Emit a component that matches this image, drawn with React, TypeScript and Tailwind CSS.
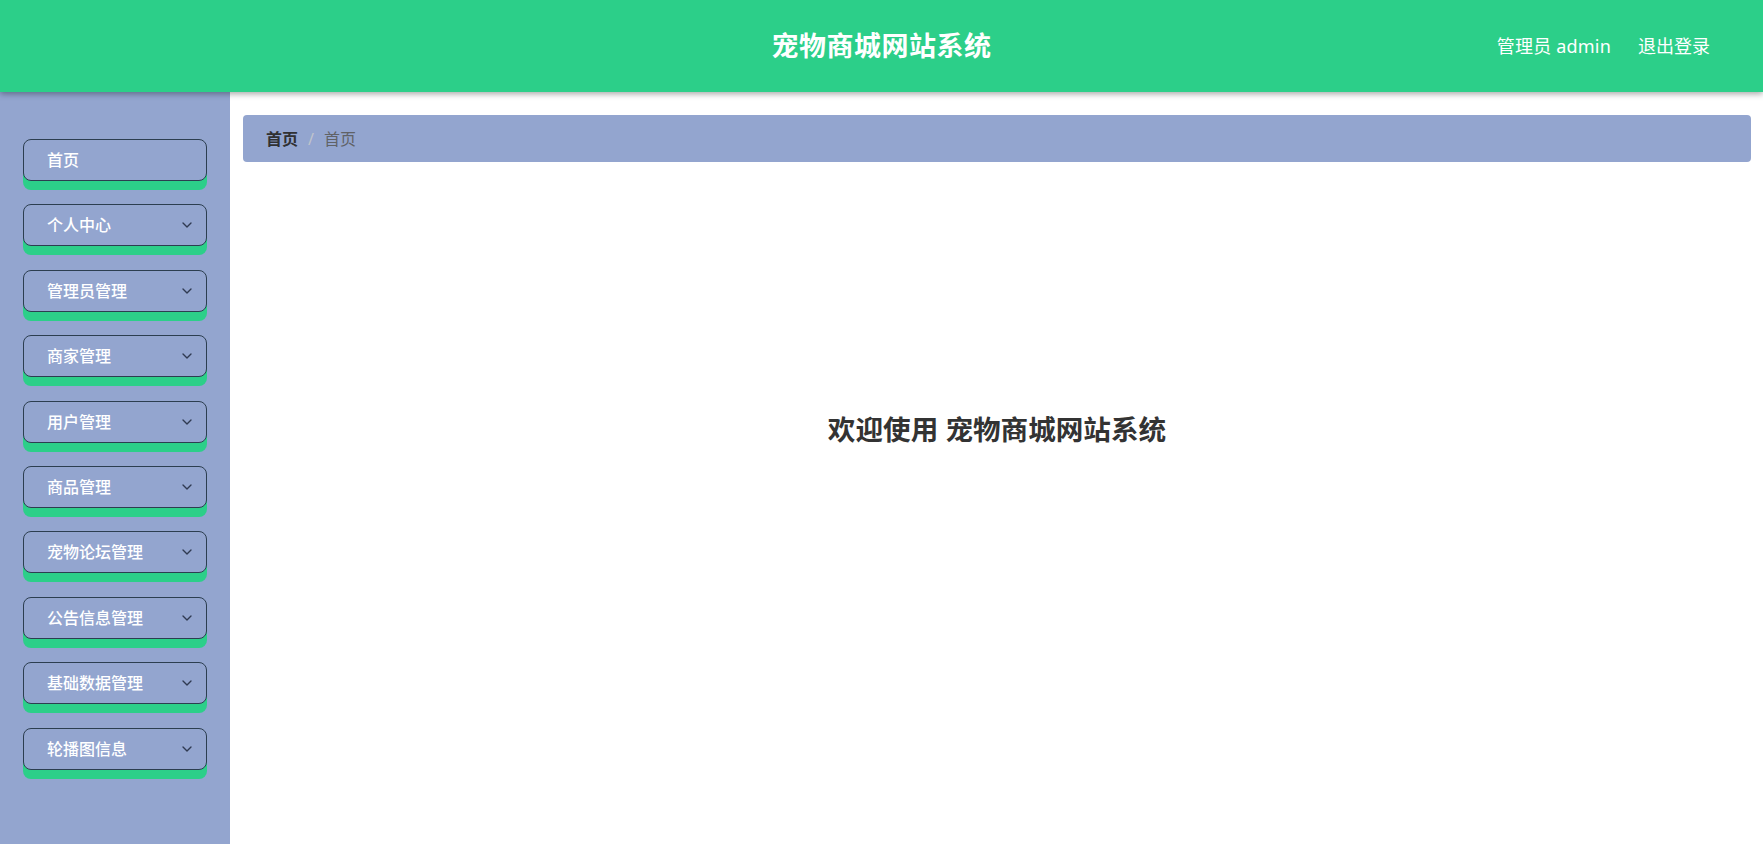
import { ChevronDown } from 'lucide-react';

const menus = [
  { name: '首页', sub: false },
  { name: '个人中心', sub: true },
  { name: '管理员管理', sub: true },
  { name: '商家管理', sub: true },
  { name: '用户管理', sub: true },
  { name: '商品管理', sub: true },
  { name: '宠物论坛管理', sub: true },
  { name: '公告信息管理', sub: true },
  { name: '基础数据管理', sub: true },
  { name: '轮播图信息', sub: true },
];

export default function App() {
  return (
    <div
      className="h-[844px] w-full flex flex-col overflow-hidden bg-white"
      style={{ fontFamily: '"Noto Sans", "Noto Sans CJK SC", sans-serif' }}
    >
      {/* Header */}
      <header className="relative z-10 h-[92px] shrink-0 bg-[#2ccf89] shadow-[0_2px_6px_rgba(0,0,0,0.35)] flex items-center justify-center">
        <h1 className="text-[27px] font-bold text-white tracking-[0.5px]">宠物商城网站系统</h1>
        <div className="absolute right-[53px] top-0 h-full flex items-center gap-[27px] text-[18px] text-white">
          <span className="tracking-[0.2px]">管理员 admin</span>
          <span>退出登录</span>
        </div>
      </header>

      <div className="flex flex-1 min-h-0">
        {/* Sidebar */}
        <aside className="w-[230px] shrink-0 bg-[#93a5cf] pt-[47px] pl-[23px]">
          <ul className="flex flex-col gap-[23.4px]">
            {menus.map((m) => (
              <li key={m.name}>
                <div className="w-[184px] h-[42px] rounded-[8px] border border-[#2c3e50] bg-[#93a5cf] shadow-[0_9px_0_#2ccf89] flex items-center justify-between pl-[23px] pr-[11px]">
                  <span className="text-[16px] font-medium text-white">{m.name}</span>
                  {m.sub && <ChevronDown className="w-[16px] h-[16px] text-[#2f3a52]" strokeWidth={2} />}
                </div>
              </li>
            ))}
          </ul>
        </aside>

        {/* Main */}
        <main className="flex-1 pt-[23px] pl-[13px] pr-[12px]">
          <div className="h-[47px] rounded-[4px] bg-[#93a5cf] flex items-center pl-[23px] text-[16px]">
            <span className="font-bold text-[#303133]">首页</span>
            <span className="mx-[10px] text-[#c0c4cc]">/</span>
            <span className="text-[#606266]">首页</span>
          </div>
          <div className="flex justify-center pt-[247px]">
            <h2 className="text-[27.6px] font-bold text-[#333]">欢迎使用 宠物商城网站系统</h2>
          </div>
        </main>
      </div>
    </div>
  );
}
